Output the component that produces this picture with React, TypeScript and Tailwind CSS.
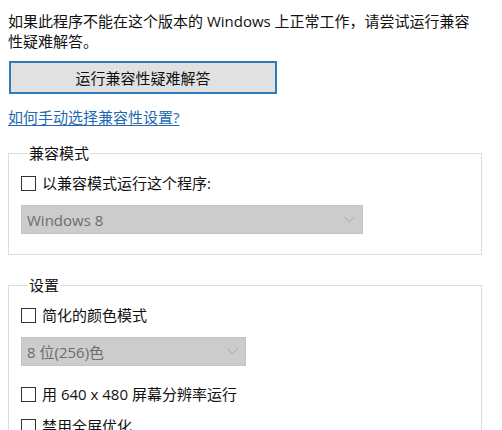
import React from "react";

const font = { fontFamily: '"Open Sans", "Noto Sans CJK SC", sans-serif' };

function Check({ label, className = "" }: { label: string; className?: string }) {
  return (
    <label className={`flex items-center gap-[6px] leading-[20px] ${className}`}>
      <span className="w-[15px] h-[15px] border border-[#333333] bg-white shrink-0" />
      <span>{label}</span>
    </label>
  );
}

function Select({ value, width, className = "" }: { value: string; width: string; className?: string }) {
  return (
    <div
      className={`flex items-center justify-between h-[29px] bg-[#cccccc] border border-[#c4c4c4] pl-[5px] pr-[7px] text-[#6d6d6d] ${width} ${className}`}
    >
      <span className="leading-[20px]">{value}</span>
      <svg width="11" height="7" viewBox="0 0 11 7" fill="none">
        <path d="M0.5 0.8 L5.5 5.8 L10.5 0.8" stroke="#a4a4a4" strokeWidth="1" />
      </svg>
    </div>
  );
}

export default function App() {
  return (
    <div className="w-[502px] h-[430px] overflow-hidden bg-white text-[#111111] text-[15px] pl-[8px]" style={font}>
      {/* intro */}
      <p className="pt-[11px] leading-[20px] w-[475px]">
        如果此程序不能在这个版本的 Windows 上正常工作，请尝试运行兼容性疑难解答。
      </p>

      <button className="mt-[10px] ml-[1px] w-[268px] h-[33px] bg-[#e1e1e1] border-2 border-[#2d7bbd] flex items-center justify-center leading-[20px]">
        运行兼容性疑难解答
      </button>

      <a className="block mt-[13px] leading-[20px] text-[#2169b0] underline underline-offset-2 w-max">
        如何手动选择兼容性设置?
      </a>

      {/* compat mode */}
      <fieldset className="mt-[16px] w-[474px] border border-[#dcdcdc] pl-[12px] pt-[10px] pb-[20px]">
        <legend className="ml-[7px] px-[1px] leading-[20px]">兼容模式</legend>
        <Check label="以兼容模式运行这个程序:" />
        <Select value="Windows 8" width="w-[342px]" className="mt-[12px]" />
      </fieldset>

      {/* settings */}
      <fieldset className="mt-[20px] w-[474px] border border-[#dcdcdc] pl-[12px] pt-[10px] pb-[20px]">
        <legend className="ml-[7px] px-[1px] leading-[20px]">设置</legend>
        <Check label="简化的颜色模式" />
        <Select value="8 位(256)色" width="w-[225px]" className="mt-[12px]" />
        <Check label="用 640 x 480 屏幕分辨率运行" className="mt-[18px]" />
        <Check label="禁用全屏优化" className="mt-[12px]" />
      </fieldset>
    </div>
  );
}
